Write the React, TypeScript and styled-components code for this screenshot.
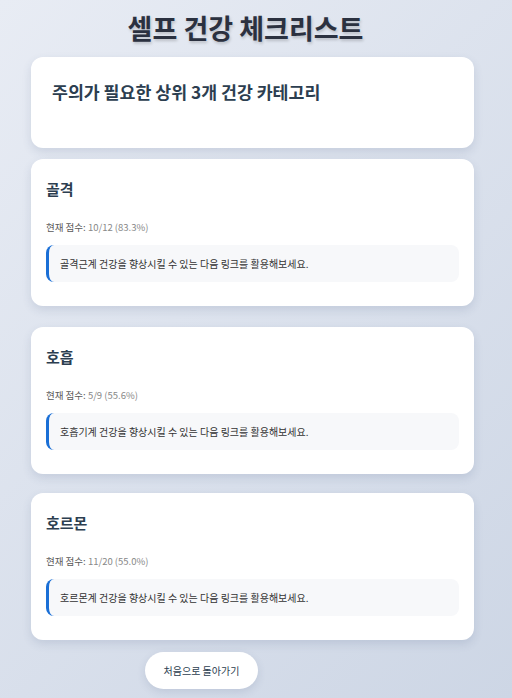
import React from "react";
import styled, { createGlobalStyle } from "styled-components";

const Global = createGlobalStyle`
  html, body { margin: 0; padding: 0; }
  body {
    font-family: "Noto Sans CJK KR", "Noto Sans", sans-serif;
    background: linear-gradient(135deg, #e8ecf4 0%, #cdd6e5 100%);
    min-height: 698px;
    color: #2c3e50;
  }
`;

const Page = styled.div`
  width: 443px;
  margin-left: 31px;
  padding: 8px 0 10px 0;
  display: flex;
  flex-direction: column;
`;

const Title = styled.h1`
  margin: 0 0 9px 0;
  text-align: center;
  font-size: 27px;
  font-weight: 700;
  line-height: 40px;
  color: #2b3140;
  text-shadow: 1px 2px 3px rgba(0, 0, 0, 0.18);
  padding-right: 14px;
`;

const Card = styled.section<{ $gap: number }>`
  background: #fff;
  border-radius: 12px;
  box-shadow: 0 4px 10px rgba(60, 80, 120, 0.14);
  margin-bottom: ${(p) => p.$gap}px;
`;

const HeaderCard = styled(Card)`
  padding: 22px 21px 43px;
`;

const HeaderTitle = styled.h2`
  margin: 0;
  font-size: 17.3px;
  font-weight: 700;
  line-height: 26px;
  color: #2c3e50;
`;

const CategoryCard = styled(Card)`
  padding: 18px 15px 24px;
`;

const CatName = styled.h3`
  margin: 0;
  font-size: 15px;
  font-weight: 700;
  line-height: 24px;
  color: #2c3e50;
`;

const Score = styled.p`
  margin: 18px 0 10px;
  font-size: 9.5px;
  line-height: 16px;
  color: #888;
`;

const ScoreLabel = styled.span`
  font-weight: 400;
  color: #5a5a5a;
`;

const Advice = styled.div`
  background: #f7f8fa;
  border-left: 3px solid #1a6fd6;
  border-radius: 8px;
  padding: 10px 10px 10px 11px;
  font-size: 10px;
  line-height: 17px;
  color: #333;
`;

const ButtonRow = styled.div`
  display: flex;
  padding-left: 114px;
`;

const BackButton = styled.button`
  font-family: inherit;
  background: #fff;
  border: none;
  border-radius: 19px;
  width: 113px;
  height: 37px;
  font-size: 10px;
  color: #2c3e50;
  box-shadow: 0 3px 8px rgba(60, 80, 120, 0.14);
  cursor: pointer;
`;

const categories = [
  { name: "골격", score: "10/12 (83.3%)", advice: "골격근계 건강을 향상시킬 수 있는 다음 링크를 활용해보세요.", gap: 21 },
  { name: "호흡", score: "5/9 (55.6%)", advice: "호흡기계 건강을 향상시킬 수 있는 다음 링크를 활용해보세요.", gap: 19 },
  { name: "호르몬", score: "11/20 (55.0%)", advice: "호르몬계 건강을 향상시킬 수 있는 다음 링크를 활용해보세요.", gap: 12 },
];

export default function App() {
  return (
    <>
      <Global />
      <Page>
        <Title>셀프 건강 체크리스트</Title>
        <HeaderCard $gap={11}>
          <HeaderTitle>주의가 필요한 상위 3개 건강 카테고리</HeaderTitle>
        </HeaderCard>
        {categories.map((c) => (
          <CategoryCard key={c.name} $gap={c.gap}>
            <CatName>{c.name}</CatName>
            <Score>
              <ScoreLabel>현재 점수:</ScoreLabel> {c.score}
            </Score>
            <Advice>{c.advice}</Advice>
          </CategoryCard>
        ))}
        <ButtonRow>
          <BackButton>처음으로 돌아가기</BackButton>
        </ButtonRow>
      </Page>
    </>
  );
}
